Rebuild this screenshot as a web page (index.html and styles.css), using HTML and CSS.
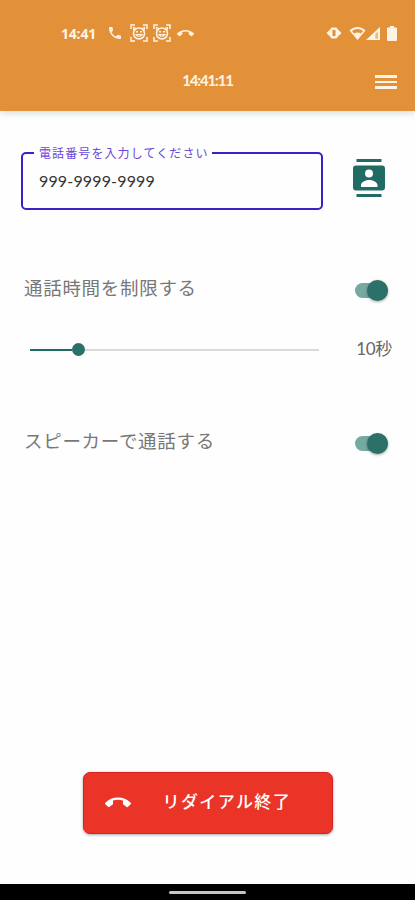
FILE: index.html
```html
<!DOCTYPE html>
<html lang="ja">
<head>
    <meta charset="UTF-8">
    <meta name="viewport" content="width=device-width, initial-scale=1.0">
    <title>リダイアル</title>
    <link rel="stylesheet" href="styles.css">
</head>
<body>

    <header>
        <div class="status">
            <span class="clock">14:41</span>
            <svg class="call" width="16" height="16" viewBox="0 0 24 24"><path d="M6.6 10.8c1.5 2.8 3.8 5.1 6.6 6.6l2.2-2.2c.3-.3.7-.4 1-.2 1.1.4 2.3.6 3.6.6.6 0 1 .4 1 1V20c0 .6-.4 1-1 1C10.600 21 3 13.400 3 4c0-.6.4-1 1-1h3.500c.6 0 1 .4 1 1 0 1.300.2 2.500.6 3.600.1.300 0 .7-.3 1z"/></svg>
            <svg class="face" width="18" height="18" viewBox="0 0 18 18"><use href="#face"/></svg>
            <svg class="face" width="18" height="18" viewBox="0 0 18 18"><use href="#face"/></svg>
            <svg class="hang" width="17" height="17" viewBox="0 0 24 24"><use href="#callend"/></svg>
            <div class="system">
                <svg width="16" height="14" viewBox="0 0 16 14"><path fill-rule="evenodd" d="M5.500 1.500h5l1 1.500 4 4-4 4-1 1.500h-5L4.500 11l-4-4 4-4zM6.500 4v6h3V4z"/></svg>
                <svg class="wifi" width="17" height="15" viewBox="0 0 17 15"><path fill-rule="evenodd" d="M.5 4.500C5-.300 12-.300 16.500 4.500L8.500 14zM3 5l2.200 2.500c2-1.500 4.600-1.500 6.600 0L14 5C11 2.300 6 2.300 3 5z"/></svg>
                <svg width="15" height="15" viewBox="0 0 15 15"><path fill-rule="evenodd" d="M14 1v13H0zM12 5.500l-2.500 2.500v4.500H12z"/><path opacity=".4" d="M9.500 8 12 5.500v7H9.500z"/></svg>
                <svg class="battery" width="10" height="15" viewBox="0 0 10 15"><path d="M3 0h4v1.500h2q1 0 1 1V14q0 1-1 1H1q-1 0-1-1V2.500q0-1 1-1h2z"/></svg>
            </div>
        </div>
        <div class="toolbar">
            <span class="title">14:41:11</span>
            <button type="button" class="menu"><i></i><i></i><i></i></button>
        </div>
    </header>

    <main>
        <div class="phone-row">
            <fieldset>
                <legend>電話番号を入力してください</legend>
                <input type="text" value="999-9999-9999">
            </fieldset>
            <svg class="contacts" width="32" height="38" viewBox="0 0 32 38"><path fill-rule="evenodd" d="M3.500 0h25v3h-25zM3.500 35h25v3h-25zM3 6.500h26q3 0 3 3v19q0 3-3 3H3q-3 0-3-3v-19q0-3 3-3zM16 10.500a4 4 0 1 0 0 8 4 4 0 0 0 0-8zM8 28h16.500v-2c0-3-5-5-8.250-5S8 23 8 26z"/></svg>
        </div>

        <div class="row limit">
            <span class="label">通話時間を制限する</span>
            <span class="switch"></span>
        </div>
        <div class="row time">
            <div class="slider"><div class="fill"></div><div class="knob"></div><div class="rest"></div></div>
            <span class="seconds">10秒</span>
        </div>
        <div class="row speaker">
            <span class="label">スピーカーで通話する</span>
            <span class="switch"></span>
        </div>

        <button type="button" class="stop">
            <svg width="26" height="26" viewBox="0 0 24 24"><use href="#callend"/></svg>
            <span>リダイアル終了</span>
        </button>
    </main>

    <footer><div class="handle"></div></footer>

    <!-- shared icons -->
    <svg class="defs" width="0" height="0">
        <symbol id="callend" viewBox="0 0 24 24"><path d="M12 9c-1.600 0-3.150.25-4.600.72v3.100c0 .39-.23.74-.56.900-.98.490-1.870 1.120-2.660 1.850-.18.180-.43.280-.7.280-.28 0-.53-.11-.71-.29L.29 13.080c-.18-.17-.29-.42-.29-.7 0-.28.11-.53.29-.71C3.340 8.780 7.460 7 12 7s8.660 1.780 11.710 4.670c.18.180.29.430.29.710 0 .28-.11.530-.29.710l-2.480 2.480c-.18.180-.43.290-.71.290-.27 0-.52-.11-.7-.28-.79-.74-1.690-1.360-2.670-1.850-.33-.16-.56-.5-.56-.9v-3.100C15.150 9.250 13.600 9 12 9z"/></symbol>
        <symbol id="face" viewBox="0 0 18 18">
            <g fill="none" stroke="#fff4e4" stroke-width="1.500">
                <path d="M1 5V1h4M13 1h4v4M17 13v4h-4M5 17H1v-4"/>
                <circle cx="9" cy="9.500" r="5.500"/>
                <path stroke-width="1.200" d="M3.800 6.500 3.500 3.500l3 1M14.200 6.500l.3-3-3 1M6 10.500q3 3.500 6 0z"/>
            </g>
            <path d="M6 7h2v1.500H6zM10 7h2v1.500h-2z"/>
        </symbol>
    </svg>

</body>
</html>
```

FILE: styles.css
```css
* {
    box-sizing: border-box;
}

body {
    display: flex;
    flex-direction: column;
    height: 900px;
    margin: 0;
    background-color: #fefefe;
    font-family: Lato, "Noto Sans CJK JP", sans-serif;
    color: #757575;
}

svg {
    flex: none;
    fill: #fff4e4;
}

button {
    border: none;
    font-family: inherit;
    cursor: pointer;
}

header {
    height: 111px;
    padding-top: 20px;
    background-color: #e39139;
    box-shadow: 0 2px 7px rgba(60, 90, 90, 0.22);
    color: #fff4e4;
}

.status {
    display: flex;
    align-items: center;
    height: 26px;
    padding: 0 18px 0 61px;
}

.clock {
    width: 36px;
    font-family: "Open Sans", sans-serif;
    font-size: 14px;
    font-weight: bold;
    letter-spacing: -0.2px;
    white-space: nowrap;
}

.call {
    margin-left: 10px;
}

.face {
    margin-left: 7px;
}

.face + .face {
    margin-left: 5px;
}

.hang {
    margin-left: 6px;
}

.system {
    display: flex;
    align-items: center;
    margin-left: auto;
}

.wifi {
    margin-left: 7px;
}

.battery {
    margin-left: 6px;
}

.toolbar {
    display: grid;
    grid-template-columns: 1fr auto 1fr;
    align-items: center;
    height: 65px;
    padding: 4px 18px 0 18px;
}

.title {
    grid-column: 2;
    margin-top: -1px;
    font-size: 15px;
    font-weight: bold;
    letter-spacing: -1.2px;
}

.menu {
    display: flex;
    flex-direction: column;
    gap: 3px;
    justify-self: end;
    width: 22px;
    margin-top: 3px;
    padding: 0;
    background: none;
}

.menu i {
    height: 2.5px;
    background-color: #fff4e4;
}

main {
    flex: 1;
    display: flex;
    flex-direction: column;
    padding: 34px 26px 0 21px;
}

.phone-row {
    display: flex;
    justify-content: space-between;
    height: 66px;
}

fieldset {
    width: 302px;
    height: 65px;
    margin: 0;
    padding: 0 15px;
    border: 2px solid #3f1fc4;
    border-radius: 5px;
}

legend {
    height: 16px;
    margin-left: -4px;
    padding: 0 3px 0 5px;
    font-size: 12px;
    line-height: 17px;
    letter-spacing: 1.1px;
    color: #6849d8;
}

fieldset input {
    width: 100%;
    height: 28px;
    margin-top: 5px;
    padding: 0 1px;
    border: none;
    outline: none;
    background: none;
    font-family: inherit;
    font-size: 16px;
    color: #333;
    letter-spacing: 0.15px;
}

.contacts {
    margin: 14px 4px 0 0;
    fill: #206b64;
}

.row {
    display: flex;
    align-items: center;
    justify-content: space-between;
    height: 30px;
}

.label {
    margin-top: -3px;
    padding-left: 3px;
    font-size: 18.5px;
    line-height: 28px;
    letter-spacing: 0.7px;
    color: #777;
}

.limit {
    margin-top: 63px;
}

.time {
    margin-top: 29px;
    margin-right: -4px;
}

.speaker {
    margin-top: 64px;
}

.switch {
    display: flex;
    justify-content: flex-end;
    align-items: center;
    width: 33px;
    height: 15px;
    margin: 2px 1px 0 0;
    border-radius: 8px;
    background-color: #75aaa3;
}

.switch::after {
    content: "";
    width: 21px;
    height: 21px;
    border-radius: 50%;
    background-color: #2b716a;
    box-shadow: 0 1px 3px rgba(0, 0, 0, 0.35);
}

.slider {
    display: flex;
    align-items: center;
    width: 289px;
    margin: 3px 0 0 9px;
}

.fill {
    width: 42px;
    height: 2px;
    background-color: #206b64;
}

.knob {
    width: 13px;
    height: 13px;
    border-radius: 50%;
    background-color: #2b716a;
}

.rest {
    flex: 1;
    height: 2px;
    background-color: #d9d9d9;
}

.seconds {
    margin: -2px 1px 0 0;
    font-size: 17px;
    letter-spacing: -0.3px;
    color: #666;
}

.stop {
    display: flex;
    align-items: center;
    align-self: center;
    width: 250px;
    height: 62px;
    margin: auto 0 50px 5px;
    padding: 0 0 4px 21px;
    border: 1px solid #dc2020;
    border-radius: 7px;
    background-color: #ea3427;
    box-shadow: 0 1px 3px rgba(0, 0, 0, 0.35);
    color: #fff;
}

.stop svg {
    fill: #fff;
    margin-top: 3px;
}

.stop span {
    margin: -2px 0 0 32px;
    font-size: 17px;
    font-weight: 500;
    letter-spacing: 1.4px;
    white-space: nowrap;
}

footer {
    display: flex;
    justify-content: center;
    height: 16px;
    padding-top: 7px;
    background-color: #000;
}

.handle {
    width: 77px;
    height: 3px;
    border-radius: 2px;
    background-color: #c9c4cb;
}

.defs {
    display: block;
}
```
